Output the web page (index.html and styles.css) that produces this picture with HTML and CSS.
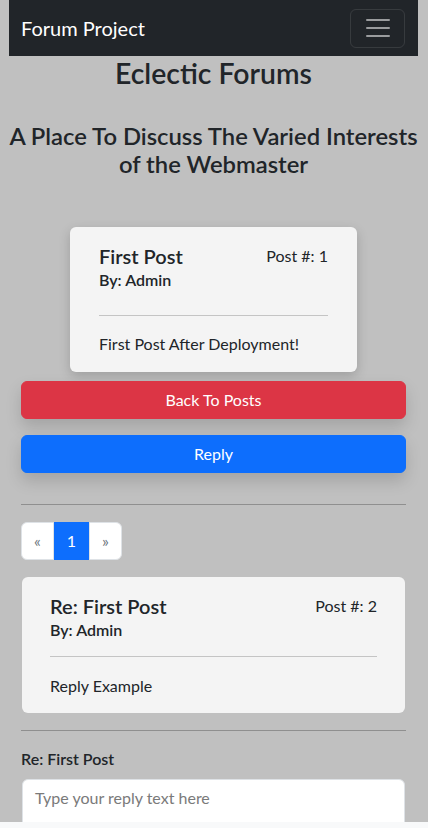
FILE: index.html
```html
<!DOCTYPE html>
<html lang="en">
<head>
<meta charset="utf-8">
<title>Forum Project</title>
<link rel="stylesheet" href="styles.css">
</head>
<body>
<div class="page">
  <nav class="navbar">
    <span class="brand">Forum Project</span>
    <button class="toggler" aria-label="Toggle navigation">
      <svg width="30" height="30" viewBox="0 0 30 30"><path d="M4 7h22M4 15h22M4 23h22" stroke="rgba(255,255,255,0.55)" stroke-width="2" stroke-linecap="round" fill="none"/></svg>
    </button>
  </nav>
  <main class="container">
    <h1 class="title">Eclectic Forums</h1>
    <h3 class="subtitle">A Place To Discuss The Varied Interests<br>of the Webmaster</h3>

    <div class="post-card main-post">
      <div class="post-head">
        <div>
          <h5 class="post-title">First Post</h5>
          <div class="post-by">By: Admin</div>
        </div>
        <span class="post-num">Post #: 1</span>
      </div>
      <hr class="post-rule">
      <p class="post-text">First Post After Deployment!</p>
    </div>

    <button class="btn btn-red">Back To Posts</button>
    <button class="btn btn-blue">Reply</button>

    <hr class="divider first">

    <ul class="pagination">
      <li class="page-link disabled">&laquo;</li>
      <li class="page-link active">1</li>
      <li class="page-link disabled">&raquo;</li>
    </ul>

    <div class="post-card reply-post">
      <div class="post-head">
        <div>
          <h5 class="post-title">Re: First Post</h5>
          <div class="post-by">By: Admin</div>
        </div>
        <span class="post-num">Post #: 2</span>
      </div>
      <hr class="post-rule">
      <p class="post-text">Reply Example</p>
    </div>

    <hr class="divider second">

    <label class="reply-label" for="reply">Re: First Post</label>
    <textarea id="reply" class="reply-box" placeholder="Type your reply text here"></textarea>
  </main>
</div>
</body>
</html>
```
FILE: styles.css
```css
html {
  background: #f8f9fa;
}
body {
  margin: 0;
  font-family: Lato, "Liberation Sans", sans-serif;
  font-size: 16px;
  line-height: 24px;
  color: #212529;
}
.page {
  background: #c0c0c0;
  height: 822px;
  overflow: hidden;
  padding: 0 10px 0 9px;
}
.navbar {
  height: 56px;
  box-sizing: border-box;
  background: #212529;
  display: flex;
  align-items: center;
  justify-content: space-between;
  padding: 0 13px 0 12px;
}
.brand {
  color: #fff;
  font-size: 20px;
  line-height: 30px;
}
.toggler {
  width: 55px;
  height: 39px;
  box-sizing: border-box;
  background: transparent;
  border: 1px solid rgba(255,255,255,0.1);
  border-radius: 6px;
  padding: 0;
  display: flex;
  align-items: center;
  justify-content: center;
}
.toggler svg { display: block; }
.container {
  padding: 0 12px;
  display: flex;
  flex-direction: column;
}
.title {
  margin: 0;
  text-align: center;
  font-size: 28.4px;
  line-height: 34px;
  font-weight: 600;
}
.subtitle {
  margin: 32px -12px 0;
  text-align: center;
  white-space: nowrap;
  font-size: 23.8px;
  line-height: 28px;
  font-weight: 600;
}
.post-card {
  background: #f4f4f4;
  border-radius: 6px;
  box-sizing: border-box;
}
.main-post {
  width: 287px;
  align-self: center;
  margin-top: 49px;
  padding: 17px 29px 16px;
  box-shadow: 0 4px 12px rgba(0,0,0,0.18);
}
.reply-post {
  margin: 17px 1px 0;
  padding: 17px 28px 15px;
}
.post-head {
  display: flex;
  justify-content: space-between;
  align-items: flex-start;
}
.post-title {
  margin: 0;
  font-size: 20px;
  line-height: 24px;
  font-weight: 600;
}
.post-by {
  font-weight: 600;
}
.post-num {
  font-size: 16px;
}
.post-rule {
  border: 0;
  border-top: 1px solid #c4c4c4;
  margin: 23px 0 16px;
}
.reply-post .post-rule {
  margin: 14px 0 17px;
}
.post-text {
  margin: 0;
}
.btn {
  height: 38px;
  border-radius: 6px;
  font-family: inherit;
  font-size: 16px;
  line-height: 24px;
  color: #fff;
  padding: 6px 12px;
  box-shadow: 0 8px 16px rgba(0,0,0,0.15);
}
.btn-red {
  margin-top: 9px;
  background: #dc3545;
  border: 1px solid #dc3545;
}
.btn-blue {
  margin-top: 16px;
  background: #0d6efd;
  border: 1px solid #0d6efd;
}
.divider {
  border: 0;
  border-top: 1px solid #8f8f8f;
  width: 100%;
  margin: 0;
}
.divider.first { margin-top: 31px; }
.divider.second { margin-top: 17px; }
.pagination {
  list-style: none;
  margin: 17px 0 0;
  padding: 0;
  display: flex;
  align-self: flex-start;
}
.page-link {
  height: 38px;
  box-sizing: border-box;
  border: 1px solid #dee2e6;
  background: #fff;
  color: #6c757d;
  font-size: 16px;
  line-height: 24px;
  text-align: center;
  padding: 6px 0;
}
.page-link:first-child {
  border-radius: 6px 0 0 6px;
}
.page-link:last-child {
  border-radius: 0 6px 6px 0;
}
.page-link.active {
  background: #0d6efd;
  border-color: #0d6efd;
  color: #fff;
  width: 35px;
}
.page-link.disabled {
  width: 33px;
}
.reply-label {
  margin-top: 17px;
  font-weight: 600;
  font-size: 16px;
  line-height: 22px;
}
.reply-box {
  margin: 9px 1px 0;
  height: 100px;
  box-sizing: border-box;
  border: 1px solid #dee2e6;
  border-radius: 6px;
  background: #fff;
  padding: 6px 12px;
  font-family: inherit;
  font-size: 16px;
  line-height: 24px;
  resize: none;
}
.reply-box::placeholder {
  color: #7a7a7a;
}
```
